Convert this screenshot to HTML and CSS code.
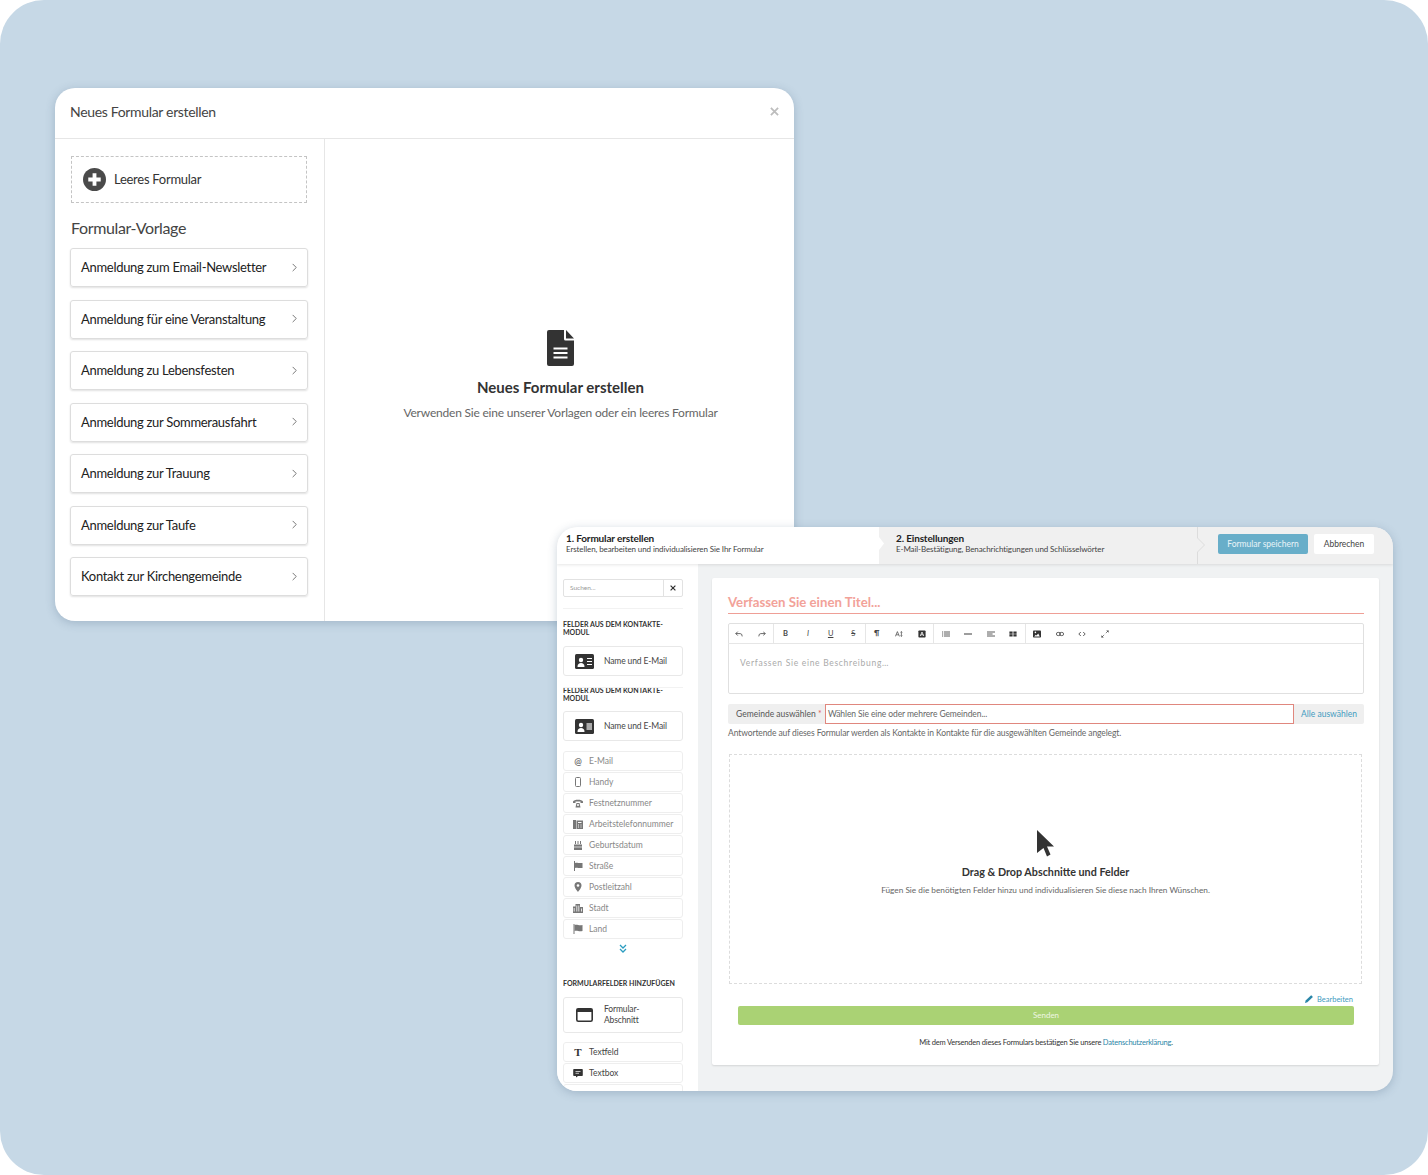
FILE: index.html
```html
<!DOCTYPE html>
<html lang="de">

<head>
  <meta charset="UTF-8">
  <title>Formular erstellen</title>
  <link rel="stylesheet" href="styles.css">
</head>

<body>
  <div class="stage">

    <!-- first window: template picker -->
    <section class="win modal">
      <header class="modal-head">
        <span>Neues Formular erstellen</span>
        <svg class="modal-close" viewBox="0 0 10 10" width="9" height="9"><path d="M1 1l8 8M9 1l-8 8" stroke="#bdbdbd" stroke-width="2" fill="none"/></svg>
      </header>
      <div class="modal-main">
        <aside class="modal-side">
          <div class="blank-btn">
            <svg viewBox="0 0 24 24" width="23" height="23"><circle cx="12" cy="12" r="12" fill="#4a4a4a"/><path d="M12 5.500v13M5.500 12h13" stroke="#fff" stroke-width="4"/></svg>
            <span>Leeres Formular</span>
          </div>
          <h3 class="side-title">Formular-Vorlage</h3>
          <div class="tpl-list">
            <div class="tpl">Anmeldung zum Email-Newsletter<svg viewBox="0 0 6 10" width="6" height="9"><path d="M1.500 1l4 4-4 4" stroke="#777" stroke-width="1.100" fill="none"/></svg></div>
            <div class="tpl">Anmeldung für eine Veranstaltung<svg viewBox="0 0 6 10" width="6" height="9"><path d="M1.500 1l4 4-4 4" stroke="#777" stroke-width="1.100" fill="none"/></svg></div>
            <div class="tpl">Anmeldung zu Lebensfesten<svg viewBox="0 0 6 10" width="6" height="9"><path d="M1.500 1l4 4-4 4" stroke="#777" stroke-width="1.100" fill="none"/></svg></div>
            <div class="tpl">Anmeldung zur Sommerausfahrt<svg viewBox="0 0 6 10" width="6" height="9"><path d="M1.500 1l4 4-4 4" stroke="#777" stroke-width="1.100" fill="none"/></svg></div>
            <div class="tpl">Anmeldung zur Trauung<svg viewBox="0 0 6 10" width="6" height="9"><path d="M1.500 1l4 4-4 4" stroke="#777" stroke-width="1.100" fill="none"/></svg></div>
            <div class="tpl">Anmeldung zur Taufe<svg viewBox="0 0 6 10" width="6" height="9"><path d="M1.500 1l4 4-4 4" stroke="#777" stroke-width="1.100" fill="none"/></svg></div>
            <div class="tpl">Kontakt zur Kirchengemeinde<svg viewBox="0 0 6 10" width="6" height="9"><path d="M1.500 1l4 4-4 4" stroke="#777" stroke-width="1.100" fill="none"/></svg></div>
          </div>
        </aside>
        <div class="modal-empty">
          <svg viewBox="0 0 27 36" width="27" height="36"><path d="M2 0h15v9a1.500 1.500 0 0 0 1.500 1.500H27V34a2 2 0 0 1-2 2H2a2 2 0 0 1-2-2V2a2 2 0 0 1 2-2z" fill="#333"/><path d="M19 0l8 8.500h-8z" fill="#333"/><path d="M6.500 18.500h14M6.500 23h14M6.500 27.500h14" stroke="#fff" stroke-width="2"/></svg>
          <h2>Neues Formular erstellen</h2>
          <p>Verwenden Sie eine unserer Vorlagen oder ein leeres Formular</p>
        </div>
      </div>
    </section>

    <!-- second window: form editor -->
    <section class="win editor">
      <header class="steps">
        <div class="step step-on">
          <strong>1. Formular erstellen</strong>
          <span>Erstellen, bearbeiten und individualisieren Sie Ihr Formular</span>
        </div>
        <div class="step step-two">
          <strong>2. Einstellungen</strong>
          <span>E-Mail-Bestätigung, Benachrichtigungen und Schlüsselwörter</span>
          <svg class="step-arrow" viewBox="0 0 8 37" width="8" height="37"><path d="M.500 0v11L7.500 18 .500 25v12" fill="none" stroke="#dcdcdc"/></svg>
        </div>
        <div class="step-actions">
          <button class="btn-save">Formular speichern</button>
          <button class="btn-cancel">Abbrechen</button>
        </div>
      </header>

      <div class="editor-main">
        <aside class="fields">
          <div class="search">
            <span class="search-input">Suchen...</span>
            <span class="search-x"><svg viewBox="0 0 10 10" width="6" height="6"><path d="M1 1l8 8M9 1l-8 8" stroke="#333" stroke-width="2" fill="none"/></svg></span>
          </div>
          <h4 class="fields-title first">Felder aus dem Kontakte-Modul</h4>
          <div class="big-field">
            <svg viewBox="0 0 19 15" width="19" height="15"><rect width="19" height="15" rx="1.500" fill="#333"/><circle cx="6" cy="6" r="2.200" fill="#fff"/><path d="M2.500 13c0-3 1.500-4 3.500-4s3.500 1 3.500 4z" fill="#fff"/><path d="M12 4.500h5M12 7.500h5M12 10.500h5" stroke="#fff"/></svg>
            <span>Name und E-Mail</span>
          </div>
          <div class="fields-clip">
            <div class="fields-scroll">
              <h4 class="fields-title">Felder aus dem Kontakte-Modul</h4>
              <div class="big-field">
                <svg viewBox="0 0 19 15" width="19" height="15"><rect width="19" height="15" rx="1.500" fill="#333"/><circle cx="6" cy="6" r="2.200" fill="#fff"/><path d="M2.500 13c0-3 1.500-4 3.500-4s3.500 1 3.500 4z" fill="#fff"/><rect x="11.500" y="4" width="5.500" height="7" fill="#aaa"/></svg>
                <span>Name und E-Mail</span>
              </div>
              <div class="small-list">
                <div class="small-field"><span class="at">@</span>E-Mail</div>
                <div class="small-field"><svg viewBox="0 0 10 10"><rect x="2.500" y="0.500" width="5" height="9" rx="1" fill="none" stroke="#777"/></svg>Handy</div>
                <div class="small-field"><svg viewBox="0 0 10 10"><path d="M0 3.500C1 1 9 1 10 3.500V5H7.500V3.500h-5V5H0z" fill="#777"/><path d="M2.500 9.500l1-4.500h3l1 4.500z" fill="#777"/><circle cx="5" cy="7" r="1" fill="#fff"/></svg>Festnetznummer</div>
                <div class="small-field"><svg viewBox="0 0 10 10"><rect y="1" width="3" height="9" fill="#777"/><path d="M3.500 1.500H10V10H3.500z" fill="#777"/><path d="M5 3.500h3.500M5 6h1M7.500 6h1M5 8h1M7.500 8h1" stroke="#fff"/></svg>Arbeitstelefonnummer</div>
                <div class="small-field"><svg viewBox="0 0 10 10"><path d="M1 4.500h8V10H1z" fill="#777"/><path d="M2.500 1v3M5 1v3M7.500 1v3" stroke="#777"/><path d="M1 7h8" stroke="#fff" stroke-width="0.700"/></svg>Geburtsdatum</div>
                <div class="small-field"><svg viewBox="0 0 10 10"><path d="M1.500 0v10" stroke="#777"/><path d="M2 2c2-1 3 .5 7.500 0v5C5 7.500 4 6 2 7z" fill="#777"/></svg>Straße</div>
                <div class="small-field"><svg viewBox="0 0 10 10"><path d="M5 0a3.500 3.500 0 0 1 3.500 3.500C8.500 6 5 10 5 10S1.500 6 1.500 3.500A3.500 3.500 0 0 1 5 0z" fill="#777"/><circle cx="5" cy="3.500" r="1.300" fill="#fff"/></svg>Postleitzahl</div>
                <div class="small-field"><svg viewBox="0 0 10 10"><path d="M0 3.500h2.500V1h4.500v3H10v6H0z" fill="#777"/><path d="M1.200 5v3.500M3.800 2.500v6M5.800 2.500v6M8.500 5.500v3" stroke="#fff" stroke-width="0.800"/></svg>Stadt</div>
                <div class="small-field"><svg viewBox="0 0 10 10"><path d="M1 0v10" stroke="#777"/><path d="M1.500 1c3-1 4 1 8 0v6c-4 1-5-1-8 0z" fill="#777"/></svg>Land</div>
              </div>
              <div class="more">
                <svg viewBox="0 0 8 9" width="8" height="9"><path d="M1 1l3 3 3-3M1 5l3 3 3-3" stroke="#2a9cc0" stroke-width="1.300" fill="none"/></svg>
              </div>
              <h4 class="fields-title">Formularfelder hinzufügen</h4>
              <div class="big-field tall">
                <svg viewBox="0 0 17 14" width="17" height="14"><rect x="0.800" y="0.800" width="15.400" height="12.400" rx="1.500" fill="none" stroke="#333" stroke-width="1.600"/><rect x="0.800" y="0.800" width="15.400" height="3.200" fill="#333"/></svg>
                <span>Formular-<br>Abschnitt</span>
              </div>
              <div class="small-list dark">
                <div class="small-field"><span class="tee">T</span>Textfeld</div>
                <div class="small-field"><svg viewBox="0 0 10 10"><path d="M1 1h8a.800.800 0 0 1 .800.800v5.400a.800.800 0 0 1-.800.800H5L3 9.500V8H1a.800.800 0 0 1-.800-.800V1.800A.800.800 0 0 1 1 1z" fill="#333"/><path d="M2.500 3.500h5M2.500 5.300h3.500" stroke="#fff" stroke-width="0.700"/></svg>Textbox</div>
                <div class="small-field"></div>
              </div>
            </div>
          </div>
        </aside>

        <div class="canvas">
          <div class="form-card">
            <h1 class="form-title">Verfassen Sie einen Titel...</h1>

            <div class="rte">
              <div class="rte-bar">
                <div class="rte-group">
                  <i><svg viewBox="0 0 10 10"><path d="M3.500 2L1 4.500 3.500 7M1 4.500h5.500Q9 4.500 9 8" fill="none" stroke="#444"/></svg></i>
                  <i><svg viewBox="0 0 10 10"><path d="M6.500 2L9 4.500 6.500 7M9 4.500H3.500Q1 4.500 1 8" fill="none" stroke="#444"/></svg></i>
                </div>
                <div class="rte-group">
                  <i><b>B</b></i>
                  <i><em>I</em></i>
                  <i><u>U</u></i>
                  <i><s>S</s></i>
                </div>
                <div class="rte-group">
                  <i><b>¶</b></i>
                  <i><svg viewBox="0 0 10 10"><path d="M.500 8L3 2l2.500 6M1.500 6h3M8 2v6M7 3l1-1 1 1M7 7l1 1 1-1" fill="none" stroke="#444" stroke-width="0.900"/></svg></i>
                  <i><svg viewBox="0 0 10 10"><rect width="9" height="9" x=".500" y=".500" rx="1" fill="#333"/><path d="M2.800 7.500L5 2.500l2.200 5M3.600 6h2.800" fill="none" stroke="#fff"/></svg></i>
                </div>
                <div class="rte-group">
                  <i><svg viewBox="0 0 10 10"><path d="M2.500 2.500H10M2.500 5H10M2.500 7.500H10" stroke="#333"/><path d="M0 2.500h1.500M0 5h1.500M0 7.500h1.500" stroke="#333"/></svg></i>
                  <i><svg viewBox="0 0 10 10"><path d="M0 5h10" stroke="#333" stroke-width="1.200"/></svg></i>
                  <i><svg viewBox="0 0 10 10"><path d="M0 2.500h10M0 5h7M0 7.500h10" stroke="#333"/></svg></i>
                  <i><svg viewBox="0 0 10 10"><path d="M.500 2h4v6h-4zM5.500 2h4v6h-4z" fill="#333"/><path d="M0 5h10" stroke="#fff" stroke-width="0.600"/></svg></i>
                </div>
                <div class="rte-group">
                  <i><svg viewBox="0 0 10 10"><rect width="10" height="9" y=".500" rx="1" fill="#333"/><circle cx="3" cy="3" r="1" fill="#fff"/><path d="M1.500 8l2-2 1 1 2-2.500L8.500 8z" fill="#fff"/></svg></i>
                  <i><svg viewBox="0 0 10 10"><rect x=".500" y="3" width="5" height="4" rx="2" fill="none" stroke="#444"/><rect x="4.500" y="3" width="5" height="4" rx="2" fill="none" stroke="#444"/></svg></i>
                  <i><svg viewBox="0 0 10 10"><path d="M3.500 2.500L1 5l2.500 2.500M6.500 2.500L9 5 6.500 7.500" fill="none" stroke="#333"/></svg></i>
                  <i><svg viewBox="0 0 10 10"><path d="M1 9l3-3M9 1L6 4" stroke="#444" stroke-width="0.800"/><path d="M.500 6.500v3h3zM9.500 3.500v-3h-3z" fill="#444"/></svg></i>
                </div>
              </div>
              <div class="rte-body">Verfassen Sie eine Beschreibung…</div>
            </div>

            <div class="parish">
              <span class="parish-label">Gemeinde auswählen <em>*</em></span>
              <span class="parish-input">Wählen Sie eine oder mehrere Gemeinden...</span>
              <span class="parish-all">Alle auswählen</span>
            </div>
            <p class="help">Antwortende auf dieses Formular werden als Kontakte in Kontakte für die ausgewählten Gemeinde angelegt.</p>

            <div class="dropzone">
              <svg viewBox="0 0 17 27" width="17" height="27"><path d="M0 0l17 16.500H10l3.500 8-3.500 2-3.500-8.500L0 23z" fill="#333"/></svg>
              <h3>Drag &amp; Drop Abschnitte und Felder</h3>
              <p>Fügen Sie die benötigten Felder hinzu und individualisieren Sie diese nach Ihren Wünschen.</p>
            </div>

            <div class="form-foot">
              <a class="edit-link"><svg viewBox="0 0 10 10" width="8" height="8"><path d="M0 10l.800-3L7 .800a1 1 0 0 1 1.400 0l.800.800a1 1 0 0 1 0 1.400L3 9.200z" fill="#2a86a8"/></svg>Bearbeiten</a>
              <div class="send">Senden</div>
              <p class="privacy">Mit dem Versenden dieses Formulars bestätigen Sie unsere <a>Datenschutzerklärung</a>.</p>
            </div>
          </div>
        </div>
      </div>
    </section>

  </div>
</body>

</html>
```

FILE: styles.css
```css
* {
  box-sizing: border-box;
}

body {
  margin: 0;
  background: #fff;
  font-family: Lato, "Open Sans", sans-serif;
  color: #333;
}

.stage {
  position: relative;
  width: 1428px;
  height: 1175px;
  background: #c6d8e6;
  border-radius: 44px;
  overflow: hidden;
}

.win {
  position: absolute;
  background: #fff;
  border-radius: 20px;
  overflow: hidden;
  box-shadow: 0 2px 10px rgba(50, 80, 110, 0.25);
}

/* template picker */
.modal {
  left: 55px;
  top: 88px;
  width: 739px;
  height: 533px;
  display: flex;
  flex-direction: column;
}

.modal-head {
  height: 51px;
  flex: none;
  display: flex;
  align-items: center;
  justify-content: space-between;
  padding: 0 15px 3px;
  font-size: 14px;
  letter-spacing: -0.330px;
  color: #444;
  border-bottom: 1px solid #e6e6e6;
}

.modal-main {
  flex: 1;
  display: flex;
  min-height: 0;
}

.modal-side {
  width: 270px;
  flex: none;
  padding: 17px 16px 0 15px;
  border-right: 1px solid #e6e6e6;
}

.blank-btn {
  display: flex;
  align-items: center;
  gap: 8px;
  width: 236px;
  height: 47px;
  margin-left: 1px;
  padding: 0 0 1px 11px;
  border: 1px dashed #c4c4c4;
  font-size: 13px;
  letter-spacing: -0.270px;
  color: #333;
}

.side-title {
  margin: 16px 0 11px 1px;
  font-size: 16px;
  line-height: 18px;
  font-weight: 400;
  letter-spacing: -0.370px;
  color: #444;
}

.tpl-list {
  display: flex;
  flex-direction: column;
  gap: 12.500px;
}

.tpl {
  display: flex;
  align-items: center;
  justify-content: space-between;
  width: 238px;
  height: 39px;
  padding: 0 10px 1px;
  font-size: 13px;
  letter-spacing: -0.300px;
  color: #222;
  border: 1px solid #ddd;
  border-radius: 3px;
  box-shadow: 0 1px 2px rgba(0, 0, 0, 0.12);
}

.modal-empty {
  flex: 1;
  display: flex;
  flex-direction: column;
  align-items: center;
  padding: 191px 0 0 2px;
}

.modal-empty h2 {
  margin: 12px 0 0;
  font-size: 15px;
  line-height: 18px;
  font-weight: 700;
  color: #333;
}

.modal-empty p {
  margin: 9px 0 0;
  font-size: 12px;
  line-height: 16px;
  letter-spacing: -0.200px;
  color: #666;
}

/* form editor */
.editor {
  left: 557px;
  top: 527px;
  width: 836px;
  height: 564px;
  display: flex;
  flex-direction: column;
  background: #f0f2f3;
}

.steps {
  height: 37px;
  flex: none;
  display: flex;
  background: #f0f0f0;
  box-shadow: 0 1px 3px rgba(0, 0, 0, 0.1);
  position: relative;
}

.step {
  position: relative;
  display: flex;
  flex-direction: column;
  justify-content: center;
  padding: 0 0 6px 9px;
  font-size: 8px;
  line-height: 10px;
  letter-spacing: -0.100px;
  color: #444;
}

.step strong {
  font-size: 10px;
  line-height: 12px;
  letter-spacing: -0.150px;
  color: #222;
}

.step-on {
  width: 322px;
  background: #fff;
}

/* little notch that the white step pokes into the grey one */
.step-on::after {
  content: "";
  position: absolute;
  left: 100%;
  top: 10px;
  width: 5px;
  height: 13px;
  background: #fff;
  clip-path: polygon(0 0, 100% 50%, 0 100%);
}

.step-two {
  width: 318px;
  padding-left: 17px;
}

.step-arrow {
  position: absolute;
  left: 100%;
  top: 0;
}

.step-actions {
  flex: 1;
  display: flex;
  align-items: center;
  padding: 0 0 4px 21px;
  gap: 6px;
}

.step-actions button {
  height: 20px;
  padding: 0;
  border: 0;
  font-family: inherit;
  font-size: 8.500px;
  border-radius: 2px;
}

.btn-save {
  width: 90px;
  background: #68aec9;
  color: #e8f4f8;
}

.btn-cancel {
  width: 60px;
  background: #fff;
  color: #444;
}

.editor-main {
  flex: 1;
  display: flex;
  min-height: 0;
}

.fields {
  width: 141px;
  flex: none;
  background: #fff;
  padding: 15px 0 0 6px;
  display: flex;
  flex-direction: column;
}

.search {
  display: flex;
  width: 120px;
  height: 18px;
  border: 1px solid #e2e2e2;
  border-radius: 2px;
  font-size: 6.500px;
  color: #999;
}

.search-input {
  flex: 1;
  padding-left: 6px;
  line-height: 16px;
  border-right: 1px solid #e2e2e2;
}

.search-x {
  width: 18px;
  display: flex;
  align-items: center;
  justify-content: center;
}

.fields-title {
  margin: 0;
  width: 120px;
  font-size: 7px;
  line-height: 7.500px;
  font-weight: 700;
  text-transform: uppercase;
  color: #333;
}

.fields-title.first {
  margin-top: 11px;
  padding-top: 12px;
  border-top: 1px solid #f2f2f2;
}

.fields-title.first + .big-field {
  margin-top: 10px;
}

.big-field {
  display: flex;
  align-items: center;
  width: 120px;
  height: 30px;
  margin-top: 9px;
  padding-left: 11px;
  gap: 10px;
  border: 1px solid #e8e8e8;
  border-radius: 3px;
  font-size: 8.500px;
  line-height: 11px;
  letter-spacing: -0.130px;
  color: #444;
}

.big-field.tall {
  height: 36px;
  padding-left: 12px;
  gap: 11px;
}

.fields-clip {
  flex: 1;
  min-height: 0;
  width: 120px;
  overflow: hidden;
  margin-top: 11px;
  border-top: 1px solid #f2f2f2;
}

.fields-scroll {
  margin-top: -1px;
}

.small-list {
  display: flex;
  flex-direction: column;
  gap: 1px;
  margin-top: 10px;
}

.small-field {
  display: flex;
  align-items: center;
  width: 120px;
  height: 20px;
  padding-left: 9px;
  gap: 6px;
  border: 1px solid #eeeeee;
  border-radius: 3px;
  font-size: 8.500px;
  color: #888;
}

.small-field svg {
  width: 10px;
  height: 10px;
  flex: none;
}

.small-list.dark {
  margin-top: 9px;
}

.small-list.dark .small-field {
  color: #444;
}

.at {
  width: 10px;
  text-align: center;
  font-weight: 700;
  font-size: 9px;
  color: #777;
}

.tee {
  width: 10px;
  text-align: center;
  font-family: "Liberation Serif", serif;
  font-weight: 700;
  font-size: 11px;
  color: #333;
}

.more {
  height: 26px;
  width: 120px;
  display: flex;
  justify-content: center;
  padding-top: 5px;
}

.more + .fields-title {
  margin-top: 15px;
}

.canvas {
  flex: 1;
  padding: 14px 14px 0;
  min-width: 0;
}

.form-card {
  width: 667px;
  height: 487px;
  background: #fff;
  border-radius: 2px;
  box-shadow: 0 1px 2px rgba(0, 0, 0, 0.12);
  padding: 16px 15px 0 16px;
}

.form-title {
  margin: 0;
  height: 20px;
  font-size: 13.200px;
  line-height: 17px;
  font-weight: 700;
  color: #f2a299;
  border-bottom: 1px solid #ef9f96;
}

.rte {
  margin-top: 9px;
  height: 71px;
  border: 1px solid #e0e0e0;
  border-radius: 2px;
}

.rte-bar {
  display: flex;
  height: 20px;
  margin-left: -1px;
  border-bottom: 1px solid #e6e6e6;
}

.rte-group {
  display: flex;
  border-right: 1px solid #e6e6e6;
}

.rte-group:last-child {
  border-right: 0;
}

.rte-group i {
  width: 22.600px;
  display: flex;
  align-items: center;
  justify-content: center;
  font-style: normal;
  font-size: 7.500px;
  color: #444;
}

.rte-group em {
  font-style: italic;
}

.rte-group svg {
  width: 8px;
  height: 8px;
}

.rte-body {
  padding: 14px 11px;
  font-size: 8.500px;
  line-height: 11px;
  letter-spacing: 0.700px;
  color: #aaa;
}

.parish {
  display: flex;
  height: 20px;
  margin-top: 10px;
  font-size: 8.500px;
  line-height: 18px;
}

.parish-label {
  width: 97px;
  flex: none;
  padding-left: 8px;
  background: #efefef;
  color: #555;
  border-radius: 2px 0 0 2px;
  line-height: 20px;
}

.parish-label em {
  font-style: normal;
  color: #e0605a;
}

.parish-input {
  flex: 1;
  padding-left: 2px;
  border: 1px solid #e0877e;
  letter-spacing: -0.100px;
  color: #666;
}

.parish-all {
  width: 70px;
  flex: none;
  text-align: center;
  background: #efefef;
  color: #3f9bc0;
  border-radius: 0 2px 2px 0;
  line-height: 20px;
}

.help {
  margin: 3px 0 0;
  font-size: 8.500px;
  line-height: 12px;
  letter-spacing: -0.100px;
  color: #666;
}

.dropzone {
  display: flex;
  flex-direction: column;
  align-items: center;
  width: 633px;
  height: 230px;
  margin: 15px 0 0 1px;
  padding-top: 75px;
  border: 1px dashed #dcdcdc;
}

.dropzone h3 {
  margin: 8px 0 0;
  font-size: 10.750px;
  line-height: 14px;
  font-weight: 700;
  color: #333;
}

.dropzone p {
  margin: 6px 0 0;
  font-size: 8.250px;
  line-height: 10px;
  color: #666;
}

.form-foot {
  display: flex;
  flex-direction: column;
  align-items: center;
  padding: 0 10px;
}

.edit-link {
  align-self: flex-end;
  display: flex;
  align-items: center;
  gap: 4px;
  height: 12px;
  margin: 9px 1px 0 0;
  font-size: 7.500px;
  color: #3f9bc0;
}

.send {
  width: 100%;
  height: 19px;
  margin-top: 1px;
  background: #aad274;
  border-radius: 2px;
  text-align: center;
  font-size: 8px;
  line-height: 19px;
  color: #eef6e2;
}

.privacy {
  margin: 13px 0 0;
  font-size: 7.500px;
  line-height: 10px;
  letter-spacing: -0.200px;
  color: #333;
}

.privacy a {
  color: #2a86a8;
}
```
